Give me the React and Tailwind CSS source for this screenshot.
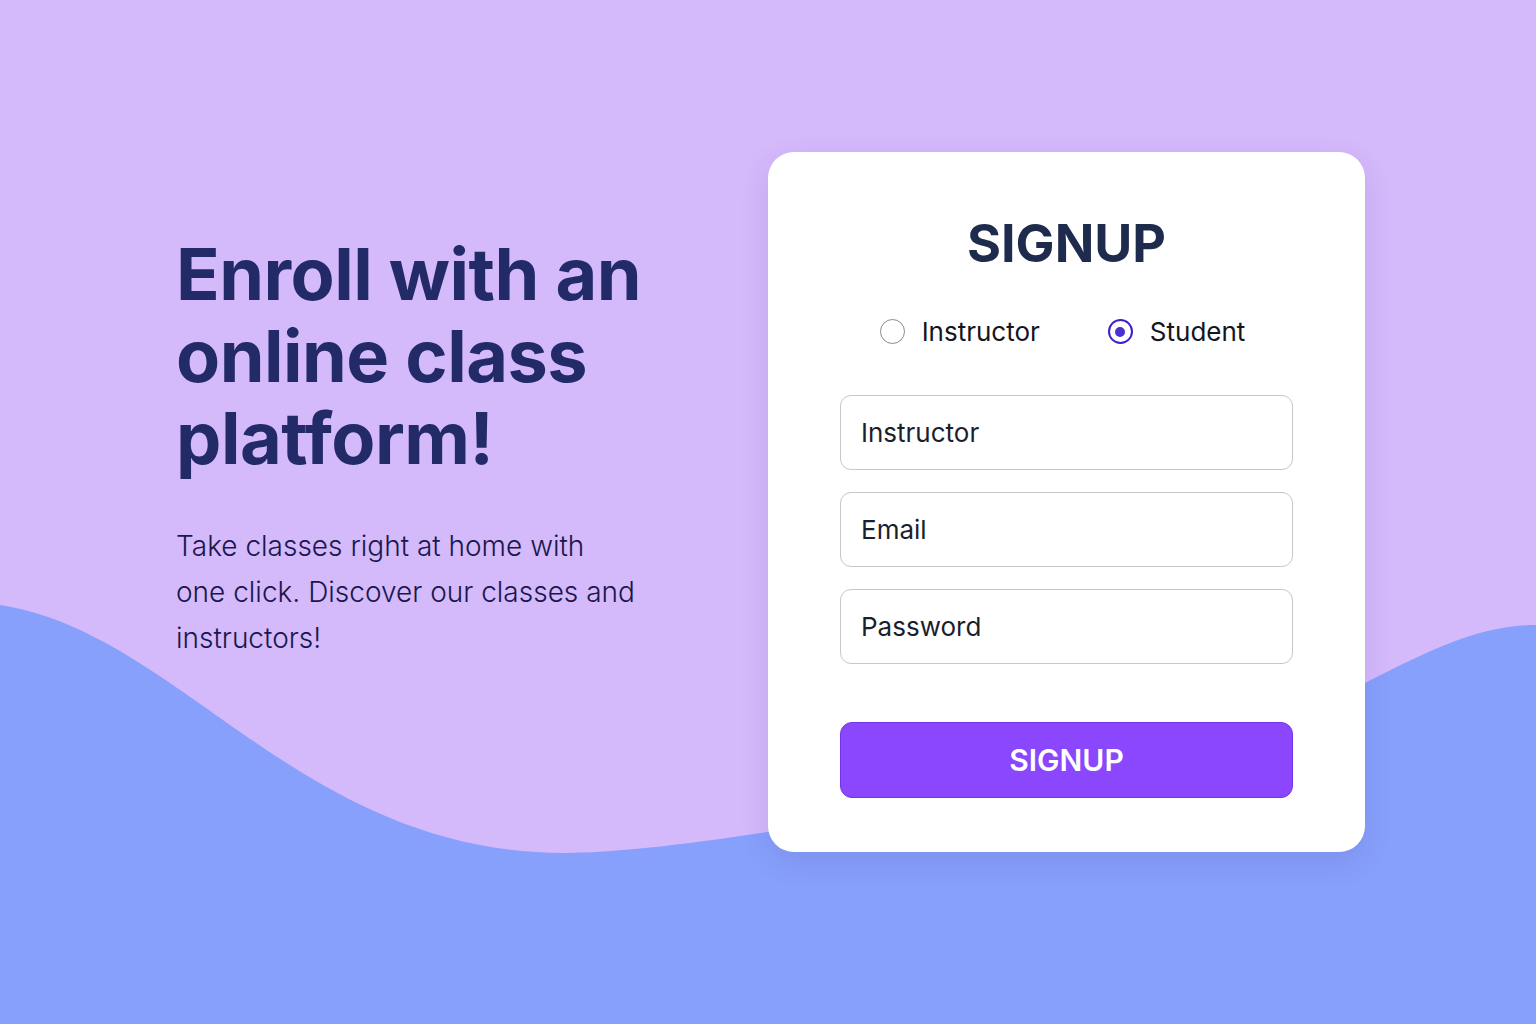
const Radio = ({ checked, label }) => (
  <label className="flex items-center gap-[17px] cursor-pointer">
    <span
      className={
        checked
          ? 'w-[25px] h-[25px] rounded-full border-2 border-[#3b1fd1] flex items-center justify-center'
          : 'w-[25px] h-[25px] rounded-full border border-[#8a8a94] bg-white'
      }
    >
      {checked && <span className="w-[10px] h-[10px] rounded-full bg-[#4a2fd3]"></span>}
    </span>
    <span className="text-[26px] text-[#15151c]">{label}</span>
  </label>
);

const Field = ({ placeholder, type = 'text' }) => (
  <input
    type={type}
    placeholder={placeholder}
    className="w-full h-[75px] rounded-[11px] border border-[#c6c6cf] bg-white px-[20px] text-[26px] text-[#1b1f2c] placeholder:text-[#1b1f2c] outline-none"
  />
);

const App = () => {
  return (
    <div className="relative w-full h-[1024px] overflow-hidden bg-[#d4b9fb] font-['Inter','Noto_Sans',sans-serif]">
      {/* wave */}
      <svg className="absolute inset-0 w-full h-full" viewBox="0 0 1536 1024" preserveAspectRatio="none">
        <path
          d="M0 605 C 180 632, 300 853, 565 853 C 720 853, 1200 760, 1365 683 C 1430 650, 1480 625, 1536 625 L1536 1024 L0 1024 Z"
          fill="#87a0fb"
        />
      </svg>

      <div className="relative flex items-start">
        {/* left copy */}
        <div className="w-[768px] shrink-0 pl-[176px] pt-[233px]">
          <h1 className="w-[480px] text-[72px] leading-[82px] font-bold text-[#232a68] tracking-[-0.5px]">
            Enroll with an online class platform!
          </h1>
          <p className="mt-[44px] text-[28px] leading-[46px] font-light text-[#1a174d]">
            Take classes right at home with
            <br />
            one click. Discover our classes and
            <br />
            instructors!
          </p>
        </div>

        {/* signup card */}
        <div className="mt-[152px] w-[597px] h-[700px] shrink-0 bg-white rounded-[26px] shadow-[0_10px_30px_rgba(60,40,140,0.12)] px-[72px] pt-[57px]">
          <h2 className="text-center text-[52px] leading-[70px] font-bold text-[#1e2b4d]">SIGNUP</h2>
          <div className="mt-[33px] flex justify-center gap-[68px] pr-[8px]">
            <Radio label="Instructor" />
            <Radio label="Student" checked />
          </div>
          <div className="mt-[44px] flex flex-col gap-[22px]">
            <Field placeholder="Instructor" />
            <Field placeholder="Email" type="email" />
            <Field placeholder="Password" type="password" />
          </div>
          <button className="mt-[58px] w-full h-[76px] rounded-[12px] bg-[#8a47fd] border border-[#7433ec] text-white text-[30px] font-semibold">
            SIGNUP
          </button>
        </div>
      </div>
    </div>
  );
};

export default App;
